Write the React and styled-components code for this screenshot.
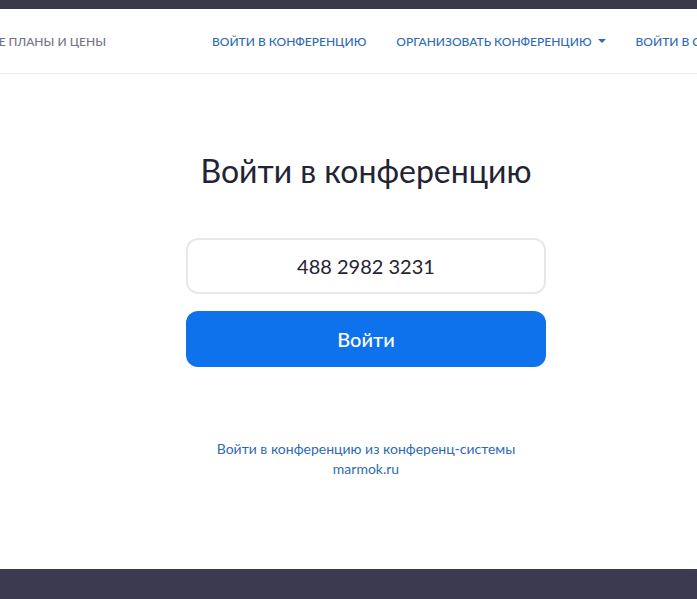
import React from 'react'
import styled, { createGlobalStyle } from 'styled-components'

const GlobalStyle = createGlobalStyle`
	html, body {
		margin: 0;
		padding: 0;
		background: #ffffff;
		font-family: Lato, "Open Sans", sans-serif;
		overflow: hidden;
	}
`

const leftLinks = ['ТАРИФНЫЕ ПЛАНЫ И ЦЕНЫ']
const rightLinks = [
	{ label: 'ВОЙТИ В КОНФЕРЕНЦИЮ' },
	{ label: 'ОРГАНИЗОВАТЬ КОНФЕРЕНЦИЮ', dropdown: true },
	{ label: 'ВОЙТИ В СИСТЕМУ' },
]

const App = () => {
	return (
		<Page>
			<GlobalStyle />
			<TopStrip />
			<Header>
				<LeftZone>
					{leftLinks.map((l) => (
						<NavItem key={l} muted>{l}</NavItem>
					))}
				</LeftZone>
				<RightNav>
					{rightLinks.map((l) => (
						<NavItem key={l.label}>
							{l.label}
							{l.dropdown && <Caret />}
						</NavItem>
					))}
				</RightNav>
			</Header>
			<Main>
				<Title>Войти в конференцию</Title>
				<Form>
					<Input defaultValue="488 2982 3231" />
					<JoinButton>Войти</JoinButton>
				</Form>
				<Links>
					<TextLink href="#">Войти в конференцию из конференц-системы</TextLink>
					<TextLink href="#">marmok.ru</TextLink>
				</Links>
			</Main>
			<Footer />
		</Page>
	)
}

const Page = styled.div`
	display: flex;
	flex-direction: column;
	height: 599px;
`
const TopStrip = styled.div`
	height: 9px;
	background: #3a384d;
	flex-shrink: 0;
`
const Header = styled.header`
	height: 64px;
	display: flex;
	align-items: center;
	border-bottom: 1px solid #ececec;
	overflow: hidden;
	flex-shrink: 0;
`
const LeftZone = styled.div`
	width: 106px;
	flex-shrink: 0;
	display: flex;
	justify-content: flex-end;
	overflow: hidden;
`
const RightNav = styled.nav`
	display: flex;
	gap: 30px;
	margin-left: 106px;
	flex-shrink: 0;
`
const NavItem = styled.a`
	display: flex;
	align-items: center;
	white-space: nowrap;
	font-size: 12px;
	font-weight: 500;
	color: ${(p) => (p.muted ? '#747487' : '#2f6bb3')};
	text-decoration: none;
	cursor: pointer;
`
const Caret = styled.span`
	margin-left: 6px;
	width: 0;
	height: 0;
	border-left: 4.5px solid transparent;
	border-right: 4.5px solid transparent;
	border-top: 4.5px solid #2f6bb3;
`
const Main = styled.main`
	flex: 1;
	display: flex;
	flex-direction: column;
	align-items: center;
	padding: 77px 0 0 35px;
`
const Title = styled.h1`
	margin: 0;
	font-size: 32px;
	line-height: 40px;
	font-weight: 400;
	color: #232333;
`
const Form = styled.div`
	margin-top: 47px;
	display: flex;
	flex-direction: column;
	gap: 17px;
	width: 360px;
`
const Input = styled.input`
	box-sizing: border-box;
	height: 56px;
	width: 100%;
	border: 2px solid #e8e8ea;
	border-radius: 12px;
	text-align: center;
	font-family: Lato, sans-serif;
	font-size: 20px;
	color: #232333;
	outline: none;
`
const JoinButton = styled.button`
	height: 56px;
	width: 100%;
	border: none;
	border-radius: 12px;
	background: #0e72ed;
	color: #ffffff;
	font-family: Lato, sans-serif;
	font-size: 20px;
	font-weight: 500;
	cursor: pointer;
`
const Links = styled.div`
	margin-top: 72px;
	display: flex;
	flex-direction: column;
	align-items: center;
`
const TextLink = styled.a`
	font-size: 14px;
	line-height: 20px;
	color: #2f6bb3;
	text-decoration: none;
`
const Footer = styled.footer`
	height: 30px;
	background: #3c3a50;
	flex-shrink: 0;
`

export default App
